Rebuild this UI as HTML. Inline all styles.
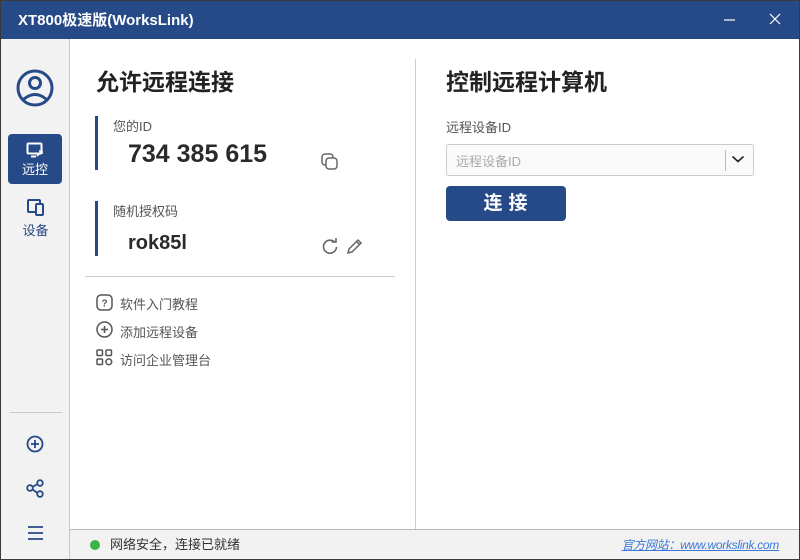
<!DOCTYPE html>
<html><head><meta charset="utf-8"><style>
*{margin:0;padding:0;box-sizing:border-box}
body{width:800px;height:560px;overflow:hidden;background:#fff;font-family:"Liberation Sans","Noto Sans CJK SC",sans-serif;position:relative;color:#333}
.frame{position:absolute;left:0;top:0;width:800px;height:560px;border:1px solid #3a3a3a;border-top:none}
.title{position:absolute;left:0;top:0;width:800px;height:39px;background:#264a87;color:#fff;font-weight:bold;font-size:15px;line-height:40px;padding-left:17px;border:1px solid #3a3a3a;border-bottom:none}
.side{position:absolute;left:1px;top:39px;width:69px;height:520px;background:#f2f2f2;border-right:1px solid #c8c8c8}
.abs{position:absolute}
.status{position:absolute;left:70px;top:529px;width:729px;height:30px;background:#f2f2f2;border-top:1px solid #b8b8b8;font-size:13px;line-height:30px}
.lbl{font-size:13px;color:#555}
.bar{position:absolute;left:95px;width:3px;background:#264a87}
</style></head><body>
<div class="title">XT800极速版(WorksLink)</div>
<svg class="abs" style="left:722px;top:12px" width="60" height="16"><line x1="2" y1="8" x2="13" y2="8" stroke="#fff" stroke-width="1.2"/><line x1="48" y1="2" x2="58" y2="12" stroke="#fff" stroke-width="1.2"/><line x1="58" y1="2" x2="48" y2="12" stroke="#fff" stroke-width="1.2"/></svg>
<div class="side">
  <svg class="abs" style="left:14px;top:29px" width="40" height="40" viewBox="0 0 40 40"><circle cx="20" cy="20" r="17" fill="none" stroke="#264a87" stroke-width="3"/><circle cx="20" cy="15" r="5.5" fill="none" stroke="#264a87" stroke-width="3"/><path d="M9 31 Q20 22 31 31" fill="none" stroke="#264a87" stroke-width="3"/></svg>
  <div class="abs" style="left:7px;top:95px;width:54px;height:50px;background:#264a87;border-radius:4px;color:#fff;text-align:center;font-size:13px">
    <svg style="margin-top:8px" width="18" height="16" viewBox="0 0 18 16"><rect x="1.5" y="1.5" width="14" height="10" rx="1" fill="none" stroke="#fff" stroke-width="2"/><line x1="5" y1="14.5" x2="10" y2="14.5" stroke="#fff" stroke-width="2"/><path d="M11 14 L16 9 M13 9 H16 V12" stroke="#fff" stroke-width="1.6" fill="none"/></svg>
    <div style="margin-top:-2px">远控</div></div>
  <svg class="abs" style="left:26px;top:160px" width="18" height="17" viewBox="0 0 18 17"><rect x="1" y="1" width="12" height="12" rx="1" fill="none" stroke="#264a87" stroke-width="2"/><rect x="9" y="5" width="7" height="11" rx="1" fill="#f2f2f2" stroke="#264a87" stroke-width="2"/></svg>
  <div class="abs" style="left:0;top:181px;width:69px;text-align:center;font-size:13px;color:#264a87">设备</div>
  <div class="abs" style="left:9px;top:373px;width:52px;height:1px;background:#c8c8c8"></div>
  <svg class="abs" style="left:25px;top:396px" width="18" height="18"><circle cx="9" cy="9" r="7.5" fill="none" stroke="#264a87" stroke-width="1.8"/><path d="M9 5v8M5 9h8" stroke="#264a87" stroke-width="1.8"/></svg>
  <svg class="abs" style="left:25px;top:440px" width="20" height="20"><circle cx="4" cy="9" r="2.8" fill="none" stroke="#264a87" stroke-width="1.8"/><circle cx="14" cy="4" r="2.8" fill="none" stroke="#264a87" stroke-width="1.8"/><circle cx="14" cy="15" r="2.8" fill="none" stroke="#264a87" stroke-width="1.8"/><path d="M6.5 8 L11.5 5 M6.5 10.5 L11.5 14" stroke="#264a87" stroke-width="1.8"/></svg>
  <svg class="abs" style="left:26px;top:486px" width="18" height="16"><path d="M1 2h15M1 8h15M1 14h15" stroke="#264a87" stroke-width="1.8"/></svg>
</div>

<div class="abs" style="left:96px;top:63px;font-size:23px;font-weight:bold;color:#222">允许远程连接</div>
<div class="bar" style="top:116px;height:54px"></div>
<div class="abs lbl" style="left:113px;top:116px">您的ID</div>
<div class="abs" style="left:128px;top:140px;font-size:25px;font-weight:bold;color:#2a2a2a">734 385 615</div>
<svg class="abs" style="left:321px;top:153px" width="18" height="18"><rect x="1" y="1" width="11" height="11" rx="3" fill="none" stroke="#666" stroke-width="1.5"/><rect x="5" y="5" width="11" height="11" rx="3" fill="#fff" stroke="#666" stroke-width="1.5"/></svg>
<div class="bar" style="top:201px;height:55px"></div>
<div class="abs lbl" style="left:113px;top:201px">随机授权码</div>
<div class="abs" style="left:128px;top:232px;font-size:20px;font-weight:bold;color:#2a2a2a">rok85l</div>
<svg class="abs" style="left:321px;top:237px" width="18" height="18"><path d="M14 5.5 A6.5 6.5 0 1 0 15.5 10" fill="none" stroke="#666" stroke-width="1.6"/><path d="M10.5 5 H15 V1" fill="none" stroke="#666" stroke-width="1.6"/></svg>
<svg class="abs" style="left:346px;top:237px" width="18" height="18"><path d="M2 16 L3 12 L12 3 L15 6 L6 15 Z M10.5 4.5 L13.5 7.5" fill="none" stroke="#666" stroke-width="1.5"/></svg>
<div class="abs" style="left:85px;top:276px;width:310px;height:1px;background:#ccc"></div>
<svg class="abs" style="left:96px;top:294px" width="18" height="18"><rect x="1" y="1" width="15" height="15" rx="4" fill="none" stroke="#555" stroke-width="1.5"/><text x="8.5" y="12.5" font-size="10" font-weight="bold" text-anchor="middle" fill="#555" font-family="Liberation Sans">?</text></svg>
<div class="abs lbl" style="left:120px;top:294px">软件入门教程</div>
<svg class="abs" style="left:96px;top:321px" width="18" height="18"><circle cx="8.5" cy="8.5" r="7.5" fill="none" stroke="#555" stroke-width="1.5"/><path d="M8.5 5v7M5 8.5h7" stroke="#555" stroke-width="1.6"/></svg>
<div class="abs lbl" style="left:120px;top:322px">添加远程设备</div>
<svg class="abs" style="left:96px;top:349px" width="18" height="18"><rect x="1" y="1" width="5.5" height="5.5" rx="1" fill="none" stroke="#555" stroke-width="1.5"/><rect x="10" y="1" width="5.5" height="5.5" rx="1" fill="none" stroke="#555" stroke-width="1.5"/><rect x="1" y="10" width="5.5" height="5.5" rx="1" fill="none" stroke="#555" stroke-width="1.5"/><circle cx="12.8" cy="12.8" r="2.9" fill="none" stroke="#555" stroke-width="1.5"/></svg>
<div class="abs lbl" style="left:120px;top:350px">访问企业管理台</div>

<div class="abs" style="left:415px;top:59px;width:1px;height:470px;background:#ccc"></div>
<div class="abs" style="left:446px;top:63px;font-size:23px;font-weight:bold;color:#222">控制远程计算机</div>
<div class="abs lbl" style="left:446px;top:117px">远程设备ID</div>
<div class="abs" style="left:446px;top:144px;width:308px;height:32px;border:1px solid #ccc;border-radius:3px;background:#fafafa"></div>
<div class="abs" style="left:456px;top:151px;font-size:13px;color:#aaa">远程设备ID</div>
<div class="abs" style="left:725px;top:150px;width:1px;height:21px;background:#bbb"></div>
<svg class="abs" style="left:731px;top:154px" width="14" height="10"><path d="M1.5 2.5 L7 7.5 L12.5 2.5" fill="none" stroke="#222" stroke-width="1.6"/></svg>
<div class="abs" style="left:446px;top:186px;width:120px;height:35px;background:#264a87;border-radius:4px;color:#fff;font-size:19px;font-weight:bold;text-align:center;line-height:36px;letter-spacing:6px;padding-left:5px">连接</div>

<div class="status">
  <span class="abs" style="left:20px;top:10px;width:10px;height:10px;border-radius:50%;background:#3bb54a"></span>
  <span class="abs" style="left:40px;top:0;color:#333">网络安全，连接已就绪</span>
  <span class="abs" style="right:20px;top:0;color:#3a78d8;text-decoration:underline;font-style:italic;font-size:12px;letter-spacing:-0.3px">官方网站：www.workslink.com</span>
</div>
<div class="frame"></div>
</body></html>
